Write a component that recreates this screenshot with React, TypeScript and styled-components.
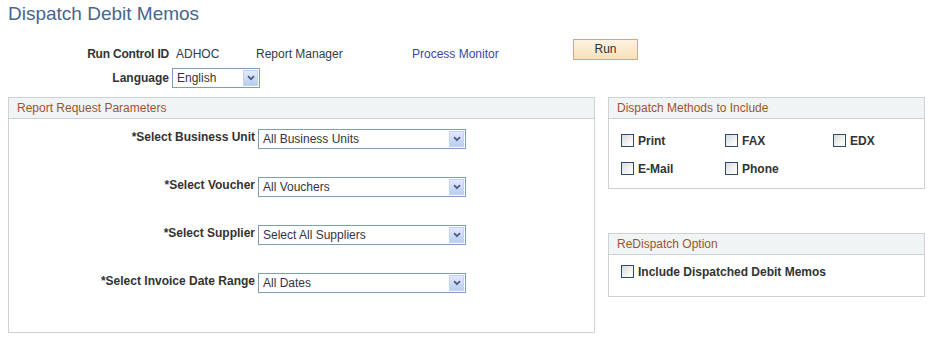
import { Fragment } from 'react';
import styled, { createGlobalStyle } from 'styled-components';

const GlobalStyle = createGlobalStyle`
  body {
    margin: 0;
    background: #ffffff;
    font-family: "Liberation Sans", Arial, sans-serif;
    font-size: 12px;
    color: #333333;
  }
`;

const Page = styled.div`
  width: 929px;
  height: 339px;
  overflow: hidden;
`;

const Title = styled.h1`
  margin: 0;
  padding: 3px 8px 0;
  font-size: 19px;
  font-weight: normal;
  line-height: 22px;
  color: #46668f;
`;

const TopRow = styled.div`
  display: flex;
  align-items: flex-start;
  margin-top: 14px;
  height: 21px;
`;

const LangRow = styled.div`
  display: flex;
  align-items: center;
  gap: 3px;
  margin-top: 8px;
  height: 20px;
`;

const HeadLabel = styled.div`
  width: 161px;
  margin-left: 8px;
  text-align: right;
  font-weight: bold;
  line-height: 14px;
  color: #333333;
  white-space: nowrap;
`;

const TopLabel = styled(HeadLabel)`
  padding-top: 8px;
  letter-spacing: -0.2px;
`;

const TextCell = styled.div<{ $w: number; $ml?: number; $link?: boolean }>`
  width: ${(p) => p.$w}px;
  margin-left: ${(p) => p.$ml ?? 0}px;
  padding-top: 8px;
  line-height: 14px;
  color: ${(p) => (p.$link ? '#3b45a6' : '#333a4a')};
  white-space: nowrap;
`;

const RunButton = styled.button`
  width: 65px;
  height: 21px;
  padding: 0;
  border: 1px solid #d8a774;
  background: linear-gradient(#fdf3e2, #f8e1b8);
  font-family: inherit;
  font-size: 12px;
  line-height: 19px;
  color: #333333;
`;

const SelectBox = styled.div<{ $w: number }>`
  display: flex;
  align-items: center;
  box-sizing: border-box;
  width: ${(p) => p.$w}px;
  height: 20px;
  border: 1px solid #7f9db9;
  background: #ffffff;
  padding: 0 1px 0 4px;
`;

const SelectText = styled.span`
  flex: 1;
  line-height: 14px;
  color: #333344;
  white-space: nowrap;
`;

const ArrowBox = styled.span`
  display: flex;
  align-items: center;
  justify-content: center;
  width: 15px;
  height: 16px;
  box-sizing: border-box;
  border: 1px solid #c3d3ee;
  background: linear-gradient(#e2ebfb, #b9cdf1);
`;

const Sections = styled.div`
  display: flex;
  align-items: flex-start;
  gap: 13px;
  margin: 9px 0 0 8px;
`;

const Group = styled.section<{ $w: number; $h: number }>`
  box-sizing: border-box;
  width: ${(p) => p.$w}px;
  height: ${(p) => p.$h}px;
  border: 1px solid #cdd2d7;
`;

const GroupHeader = styled.div`
  height: 20px;
  padding-left: 8px;
  border-bottom: 1px solid #cdd2d7;
  background: #f1f4f5;
  line-height: 20px;
  color: #a0532d;
`;

const RightColumn = styled.div`
  display: flex;
  flex-direction: column;
  gap: 44px;
`;

const FieldGrid = styled.div`
  display: grid;
  grid-template-columns: 246px 208px;
  column-gap: 3px;
  row-gap: 28px;
  padding-top: 10px;
`;

const FieldLabel = styled.div`
  padding-top: 1px;
  text-align: right;
  font-weight: bold;
  line-height: 14px;
  color: #333333;
  white-space: nowrap;
`;

const CheckGrid = styled.div<{ $pt: number }>`
  display: grid;
  grid-template-columns: 104px 108px 1fr;
  row-gap: 15px;
  padding: ${(p) => p.$pt}px 0 0 12px;
`;

const CheckItem = styled.label<{ $wide?: boolean }>`
  display: flex;
  align-items: center;
  gap: 4px;
  height: 13px;
  grid-column: ${(p) => (p.$wide ? '1 / -1' : 'auto')};
  font-weight: bold;
  line-height: 14px;
  color: #333333;
  white-space: nowrap;
`;

const CheckSquare = styled.span`
  flex: 0 0 13px;
  box-sizing: border-box;
  width: 13px;
  height: 13px;
  border: 1px solid #2d4b6c;
  background: linear-gradient(135deg, #d9d9d9, #f3f3f3 60%, #ffffff);
`;

function Chevron() {
  return (
    <svg width="8" height="6" viewBox="0 0 8 6">
      <polyline points="1,1.2 4,4.2 7,1.2" fill="none" stroke="#4a5c7e" strokeWidth="1.7" />
    </svg>
  );
}

function Select({ value, width }: { value: string; width: number }) {
  return (
    <SelectBox $w={width}>
      <SelectText>{value}</SelectText>
      <ArrowBox>
        <Chevron />
      </ArrowBox>
    </SelectBox>
  );
}

function Check({ label, wide }: { label: string; wide?: boolean }) {
  return (
    <CheckItem $wide={wide}>
      <CheckSquare />
      {label}
    </CheckItem>
  );
}

const params = [
  { label: '*Select Business Unit', value: 'All Business Units' },
  { label: '*Select Voucher', value: 'All Vouchers' },
  { label: '*Select Supplier', value: 'Select All Suppliers' },
  { label: '*Select Invoice Date Range', value: 'All Dates' },
];

export default function App() {
  return (
    <Page>
      <GlobalStyle />
      <Title>Dispatch Debit Memos</Title>

      <TopRow>
        <TopLabel>Run Control ID</TopLabel>
        <TextCell $w={80} $ml={7}>ADHOC</TextCell>
        <TextCell $w={156}>Report Manager</TextCell>
        <TextCell $w={161} $link>Process Monitor</TextCell>
        <RunButton type="button">Run</RunButton>
      </TopRow>

      <LangRow>
        <HeadLabel>Language</HeadLabel>
        <Select value="English" width={88} />
      </LangRow>

      <Sections>
        <Group $w={587} $h={236}>
          <GroupHeader>Report Request Parameters</GroupHeader>
          <FieldGrid>
            {params.map((p) => (
              <Fragment key={p.label}>
                <FieldLabel>{p.label}</FieldLabel>
                <Select value={p.value} width={208} />
              </Fragment>
            ))}
          </FieldGrid>
        </Group>

        <RightColumn>
          <Group $w={317} $h={92}>
            <GroupHeader>Dispatch Methods to Include</GroupHeader>
            <CheckGrid $pt={15}>
              <Check label="Print" />
              <Check label="FAX" />
              <Check label="EDX" />
              <Check label="E-Mail" />
              <Check label="Phone" />
            </CheckGrid>
          </Group>
          <Group $w={317} $h={64}>
            <GroupHeader>ReDispatch Option</GroupHeader>
            <CheckGrid $pt={10}>
              <Check label="Include Dispatched Debit Memos" wide />
            </CheckGrid>
          </Group>
        </RightColumn>
      </Sections>
    </Page>
  );
}
